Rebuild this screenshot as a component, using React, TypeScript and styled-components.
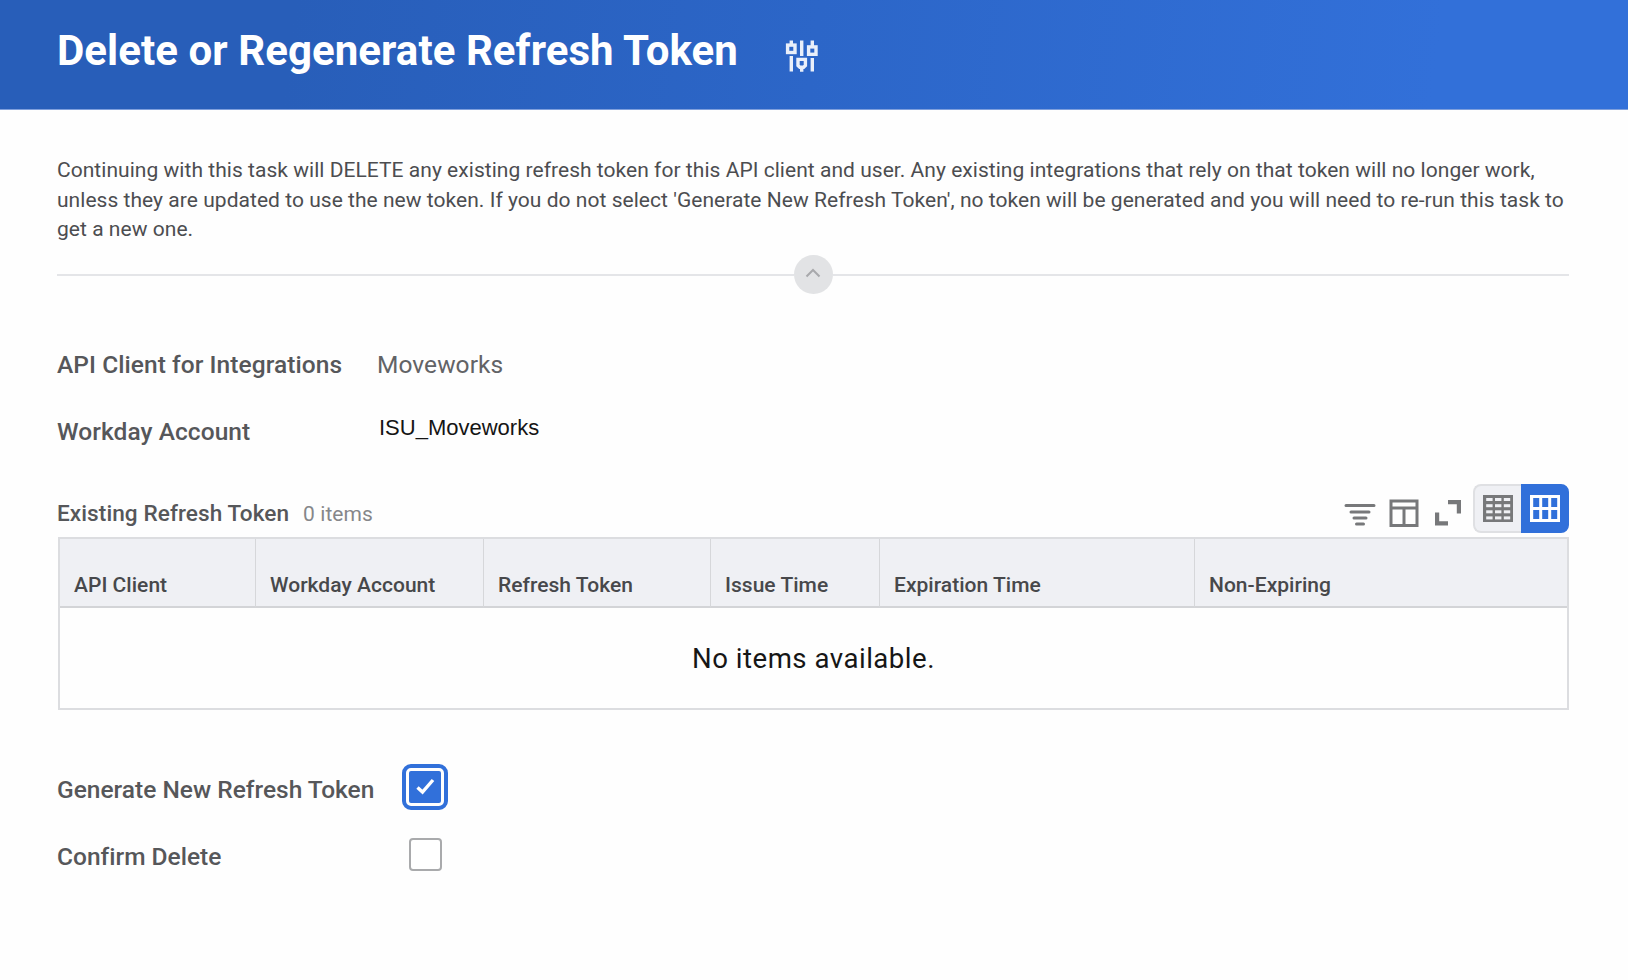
import React from "react";
import styled, { createGlobalStyle } from "styled-components";

const GlobalStyle = createGlobalStyle`
  * { box-sizing: border-box; }
  body {
    margin: 0;
    background: #fefefe;
    font-family: Roboto, "Liberation Sans", sans-serif;
    color: #4c4d50;
  }
  #root { height: 980px; overflow: hidden; }
`;

const Header = styled.header`
  display: flex;
  align-items: flex-start;
  height: 110px;
  padding: 26px 57px 0;
  border-bottom: 1px solid #7f9fdc;
  background: linear-gradient(97deg, #285eb9 0%, #285eb9 18%, #2c66c8 50%, #3270d9 88%, #3270d9 100%);
`;

const Title = styled.h1`
  margin: 0;
  width: 728px;
  color: #fff;
  font-size: 42px;
  line-height: 50px;
  font-weight: 700;
  letter-spacing: 0.06px;
  white-space: nowrap;
`;

const HeaderIcon = styled.svg`
  width: 34px;
  height: 34px;
  margin-top: 13px;
`;

const Main = styled.main`
  padding: 46px 59px 0 57px;
`;

const Notice = styled.p`
  margin: 0;
  font-size: 21px;
  line-height: 29.6px;
  height: 99px;
  white-space: nowrap;
  letter-spacing: 0.038px;
`;

const Line = styled.span`
  display: block;
`;

const Divider = styled.div`
  display: flex;
  align-items: center;
  height: 40px;
  &::before, &::after {
    content: "";
    flex: 1;
    height: 2px;
    background: #e4e5e8;
  }
`;

const Collapse = styled.button`
  display: grid;
  place-items: center;
  width: 39px;
  height: 39px;
  margin-bottom: 2px;
  padding: 0 0 2px;
  border: 0;
  border-radius: 50%;
  background: #e2e3e5;
`;

const Fields = styled.dl`
  margin: 36px 0 0;
`;

const Field = styled.div`
  display: flex;
  align-items: center;
  height: 67.5px;
`;

const Label = styled.dt`
  width: 320px;
  font-size: 24.5px;
  line-height: 28px;
  font-weight: 500;
  color: #56575a;
  white-space: nowrap;
  letter-spacing: 0.06px;
`;

const Value = styled.dd<{ $plain?: boolean }>`
  margin: 0;
  font-size: ${(p) => (p.$plain ? 22 : 24.5)}px;
  line-height: 28px;
  color: ${(p) => (p.$plain ? "#151515" : "#626366")};
  font-family: ${(p) => (p.$plain ? '"Liberation Sans", sans-serif' : "inherit")};
  padding: ${(p) => (p.$plain ? "0 0 8px 2px" : "0")};
  letter-spacing: ${(p) => (p.$plain ? 0 : 0.06)}px;
`;

const GridBar = styled.div`
  display: flex;
  justify-content: space-between;
  height: 53px;
  margin-top: 18px;
`;

const Caption = styled.h2`
  display: flex;
  align-items: baseline;
  gap: 14px;
  margin: 0;
  padding-top: 16px;
  font-size: 22.6px;
  line-height: 28px;
  font-weight: 500;
  color: #56575a;
  letter-spacing: 0.07px;
`;

const Count = styled.span`
  font-size: 21px;
  font-weight: 400;
  color: #86878a;
`;

const Tools = styled.div`
  display: flex;
  align-items: flex-start;
`;

const ToolIcon = styled.svg<{ $w: number; $gap: number }>`
  width: ${(p) => p.$w}px;
  height: 30px;
  margin: 14px ${(p) => p.$gap}px 0 0;
`;

const Toggle = styled.div`
  display: flex;
  width: 96px;
  height: 49px;
`;

const ToggleButton = styled.button<{ $active?: boolean }>`
  display: grid;
  place-items: center;
  width: 48px;
  height: 49px;
  padding: 0;
  border: 2px solid ${(p) => (p.$active ? "#3170da" : "#dfe0e3")};
  border-right-width: ${(p) => (p.$active ? 2 : 0)}px;
  border-radius: ${(p) => (p.$active ? "0 8px 8px 0" : "8px 0 0 8px")};
  background: ${(p) => (p.$active ? "#3170da" : "#eff0f4")};
`;

const Table = styled.table`
  width: 1511px;
  margin-left: 1px;
  border-collapse: separate;
  border-spacing: 0;
  table-layout: fixed;
  border: 2px solid #dcdde0;
`;

const HeadCell = styled.th<{ $width?: number }>`
  width: ${(p) => (p.$width ? `${p.$width}px` : "auto")};
  height: 69px;
  padding: 24px 0 0 14px;
  text-align: left;
  font-size: 21px;
  line-height: 26px;
  font-weight: 500;
  letter-spacing: 0.03px;
  color: #47484b;
  background: #eff0f4;
  border-right: 1px solid #d6d7da;
  border-bottom: 2px solid #d3d4d7;
  white-space: nowrap;
  &:last-child { border-right: 0; }
`;

const EmptyCell = styled.td`
  height: 100px;
  padding: 2px 0 0;
  text-align: center;
  font-size: 27.6px;
  line-height: 32px;
  color: #161616;
  letter-spacing: 0.5px;
  background: #fefefe;
`;

const Options = styled.div`
  margin-top: 43px;
`;

const Option = styled.label`
  display: flex;
  align-items: center;
  height: 67.5px;
`;

const OptionText = styled.span`
  width: 345px;
  padding-top: 6px;
  font-size: 24.5px;
  line-height: 28px;
  font-weight: 500;
  color: #56575a;
  letter-spacing: 0.01px;
`;

const CheckFrame = styled.span<{ $focused?: boolean }>`
  display: grid;
  place-items: center;
  width: 46px;
  height: 46px;
  border: 4px solid ${(p) => (p.$focused ? "#3170da" : "transparent")};
  border-radius: 9px;
`;

const Box = styled.span<{ $checked?: boolean }>`
  display: grid;
  place-items: center;
  width: ${(p) => (p.$checked ? 32 : 33)}px;
  height: ${(p) => (p.$checked ? 32 : 33)}px;
  border-radius: ${(p) => (p.$checked ? 2 : 4)}px;
  border: ${(p) => (p.$checked ? "0" : "2px solid #a9aaac")};
  background: ${(p) => (p.$checked ? "#3170da" : "#fff")};
`;

const columns: { title: string; width?: number }[] = [
  { title: "API Client", width: 196 },
  { title: "Workday Account", width: 228 },
  { title: "Refresh Token", width: 227 },
  { title: "Issue Time", width: 169 },
  { title: "Expiration Time", width: 315 },
  { title: "Non-Expiring" },
];

const SlidersIcon = () => (
  <HeaderIcon viewBox="0 0 34 34" fill="none" stroke="#e9effa" strokeWidth="3.4">
    <path d="M6.3 1.5V5M6.3 17V32.5M16.7 1.5V17M16.7 29V32.7M27.3 1.5V7M27.3 19V32.5" />
    <rect x="2.6" y="6.1" width="7.4" height="7.4" />
    <path d="M13 20.4H20.4V26.6L18.6 28.2H14.8L13 26.6Z" />
    <rect x="23.6" y="7.9" width="7.4" height="7.4" />
  </HeaderIcon>
);

const FilterIcon = () => (
  <ToolIcon $w={32} $gap={13} viewBox="0 0 32 30" stroke="#77787a" strokeWidth="3" strokeLinecap="round">
    <path d="M2 7.5H30M7 14H25M10 20H22M12.5 26H19.5" />
  </ToolIcon>
);

const ColumnsIcon = () => (
  <ToolIcon $w={30} $gap={15} viewBox="0 0 30 30" fill="none" stroke="#77787a" strokeWidth="3">
    <path d="M2 3H28V27.5H2ZM2 10H28M15 10V27.5" />
  </ToolIcon>
);

const ExpandIcon = () => (
  <ToolIcon $w={28} $gap={11} viewBox="0 0 28 30" fill="none" stroke="#77787a" strokeWidth="4.2">
    <path d="M14 4.1H24.9V15.5M3.1 14.5V25.4H14" />
  </ToolIcon>
);

const DenseGridIcon = () => (
  <svg width="30" height="27" viewBox="0 0 30 27">
    <rect width="30" height="27" fill="#77787a" />
    {[3, 9.2, 15.3, 21.4].map((y) =>
      [3.2, 12, 20.8].map((x) => <rect key={`${x}-${y}`} x={x} y={y} width="6.4" height="3" fill="#eff0f4" />)
    )}
  </svg>
);

const GridIcon = () => (
  <svg width="30" height="27" viewBox="0 0 30 27">
    <rect width="30" height="27" fill="#fff" />
    {[3, 15].map((y) =>
      [3.2, 12.2, 21.2].map((x) => <rect key={`${x}-${y}`} x={x} y={y} width="6" height="9" fill="#3170da" />)
    )}
  </svg>
);

export default function App() {
  return (
    <>
      <GlobalStyle />
      <Header>
        <Title>Delete or Regenerate Refresh Token</Title>
        <SlidersIcon />
      </Header>
      <Main>
        <Notice>
          <Line>
            Continuing with this task will DELETE any existing refresh token for this API client and user. Any existing
            integrations that rely on that token will no longer work,
          </Line>
          <Line>
            unless they are updated to use the new token. If you do not select 'Generate New Refresh Token', no token
            will be generated and you will need to re-run this task to
          </Line>
          <Line>get a new one.</Line>
        </Notice>
        <Divider>
          <Collapse aria-label="Collapse instructions">
            <svg width="16" height="10" viewBox="0 0 16 10" fill="none" stroke="#a8a9ac" strokeWidth="2">
              <path d="M1.5 8.5L8 2L14.5 8.5" />
            </svg>
          </Collapse>
        </Divider>
        <Fields>
          <Field>
            <Label>API Client for Integrations</Label>
            <Value>Moveworks</Value>
          </Field>
          <Field>
            <Label>Workday Account</Label>
            <Value $plain>ISU_Moveworks</Value>
          </Field>
        </Fields>
        <GridBar>
          <Caption>
            Existing Refresh Token <Count>0 items</Count>
          </Caption>
          <Tools>
            <FilterIcon />
            <ColumnsIcon />
            <ExpandIcon />
            <Toggle>
              <ToggleButton aria-label="Compact grid">
                <DenseGridIcon />
              </ToggleButton>
              <ToggleButton $active aria-label="Expanded grid">
                <GridIcon />
              </ToggleButton>
            </Toggle>
          </Tools>
        </GridBar>
        <Table>
          <thead>
            <tr>
              {columns.map((c) => (
                <HeadCell key={c.title} $width={c.width}>
                  {c.title}
                </HeadCell>
              ))}
            </tr>
          </thead>
          <tbody>
            <tr>
              <EmptyCell colSpan={6}>No items available.</EmptyCell>
            </tr>
          </tbody>
        </Table>
        <Options>
          <Option>
            <OptionText>Generate New Refresh Token</OptionText>
            <CheckFrame $focused>
              <Box $checked>
                <svg width="19" height="17" viewBox="0 0 19 17" fill="none" stroke="#fff" strokeWidth="3.4">
                  <path d="M1.5 9.5L6.5 14L17 2" />
                </svg>
              </Box>
            </CheckFrame>
          </Option>
          <Option>
            <OptionText>Confirm Delete</OptionText>
            <CheckFrame>
              <Box />
            </CheckFrame>
          </Option>
        </Options>
      </Main>
    </>
  );
}
